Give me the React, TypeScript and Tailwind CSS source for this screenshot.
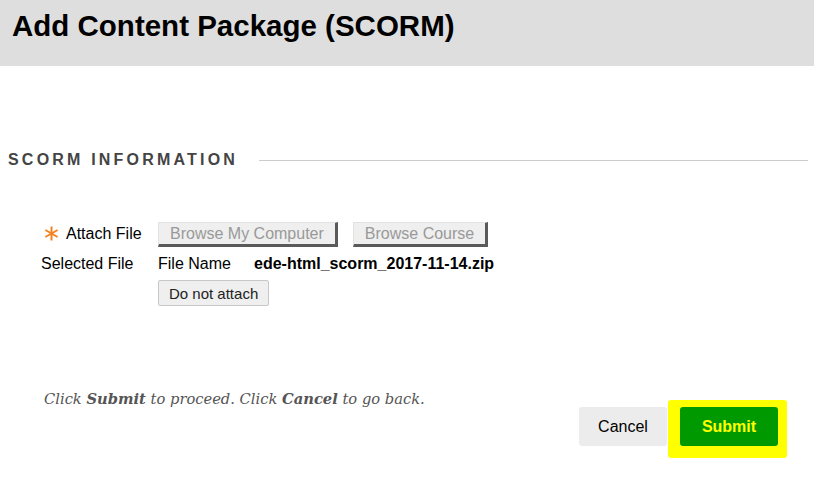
import React from 'react';

function RequiredMark() {
  return (
    <svg width="15" height="15" viewBox="0 0 15 15" className="shrink-0">
      <g stroke="#f5821f" strokeWidth="2" strokeLinecap="butt">
        <line x1="7.5" y1="0.5" x2="7.5" y2="14.5" />
        <line x1="1.4" y1="4" x2="13.6" y2="11" />
        <line x1="1.4" y1="11" x2="13.6" y2="4" />
      </g>
    </svg>
  );
}

function BrowseButton({ label }: { label: string }) {
  return (
    <button className="h-[25px] px-[11px] bg-[#efefef] text-[#999] text-[16px] leading-none border-t border-l border-t-[#e2e2e2] border-l-[#e2e2e2] border-b-[3px] border-r-[3px] border-b-[#5a5a5a] border-r-[#5a5a5a]">
      {label}
    </button>
  );
}

export default function App() {
  return (
    <div className="w-[814px] h-[479px] bg-white overflow-hidden font-['Liberation_Sans',Arial,sans-serif] text-black">
      <div className="h-[66px] bg-[#dedede] pl-[12px] pt-[11px]">
        <h1 className="text-[29.5px] leading-none font-bold">Add Content Package (SCORM)</h1>
      </div>

      <div className="mt-[84px] flex items-center pl-[8px] h-[20px]">
        <h2 className="text-[16px] font-bold tracking-[3.2px] text-[#444] leading-none">SCORM INFORMATION</h2>
        <div className="flex-1 h-px bg-[#cccccc] ml-[21px] mr-[6px]" />
      </div>

      <div className="mt-[52px] pl-[41px] grid grid-cols-[117px_1fr] text-[16px]">
        <div className="flex items-center h-[25px] pl-[3px] gap-[7px] pb-[2px]">
          <RequiredMark />
          <span>Attach File</span>
        </div>
        <div className="flex gap-[15px]">
          <BrowseButton label="Browse My Computer" />
          <BrowseButton label="Browse Course" />
        </div>

        <div className="pt-[5px]">Selected File</div>
        <div className="pt-[5px]">
          <div className="flex">
            <span className="w-[96px]">File Name</span>
            <span className="font-bold">ede-html_scorm_2017-11-14.zip</span>
          </div>
          <button className="mt-[4px] h-[26px] px-[10px] bg-[#efefef] border border-[#c8c8c8] rounded-[2px] text-[15px] leading-none text-[#222]">
            Do not attach
          </button>
        </div>
      </div>

      <div className="mt-[80px] flex items-start">
        <p className="pl-[44px] pt-[2px] text-[14.7px] italic text-[#555] font-['DejaVu_Serif',Georgia,serif]">
          Click <b>Submit</b> to proceed. Click <b>Cancel</b> to go back.
        </p>
        <div className="ml-auto mr-[36px] mt-[21px] flex gap-[13px]">
          <button className="w-[88px] h-[39px] bg-[#ececec] rounded-[3px] text-[16px]">Cancel</button>
          <div className="relative">
            <span className="absolute -left-[12px] -right-[9px] -top-[7px] -bottom-[12px] bg-[#ffff00] rounded-[3px]" />
            <button className="relative w-[98px] h-[39px] bg-[#009a00] rounded-[3px] text-[16px] font-bold text-[#ffff00]">
              Submit
            </button>
          </div>
        </div>
      </div>
    </div>
  );
}
